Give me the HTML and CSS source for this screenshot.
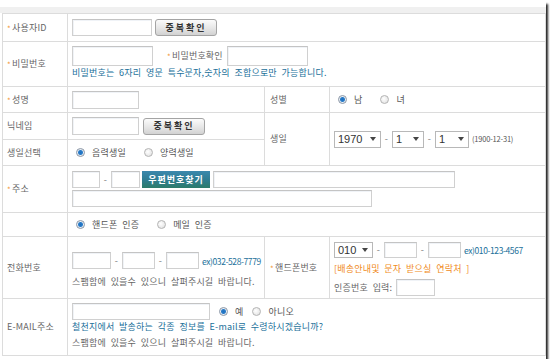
FILE: index.html
```html
<!DOCTYPE html>
<html>
<head>
<meta charset="utf-8">
<title>회원가입</title>
<link rel="stylesheet" href="styles.css">
</head>
<body>
<div class="frame">
    <div class="band"></div>
    <div class="form">
        <!-- 사용자ID -->
        <div class="th"><span class="req">*</span>사용자ID</div>
        <div class="td wide mid">
            <input class="inp" type="text" style="width:80px;height:17px">
            <span class="btn gray">중복확인</span>
        </div>

        <!-- 비밀번호 -->
        <div class="th"><span class="req">*</span>비밀번호</div>
        <div class="td wide pw">
            <div class="line">
                <input class="inp" type="text" style="width:81px;height:20px">
                <span class="sub"><span class="req">*</span>비밀번호확인</span>
                <input class="inp" type="text" style="width:81px;height:20px">
            </div>
            <div class="blue">비밀번호는 6자리 영문 특수문자,숫자의 조합으로만 가능합니다.</div>
        </div>

        <!-- 성명 / 성별 -->
        <div class="th"><span class="req">*</span>성명</div>
        <div class="td mid">
            <input class="inp" type="text" style="width:67px;height:18px">
        </div>
        <div class="th th2">성별</div>
        <div class="td mid opts">
            <span class="opt"><i class="rd on"></i>남</span>
            <span class="opt"><i class="rd"></i>녀</span>
        </div>

        <!-- 닉네임 / 생일 -->
        <div class="th">닉네임</div>
        <div class="td mid">
            <input class="inp" type="text" style="width:67px;height:18px">
            <span class="btn gray nick">중복확인</span>
        </div>
        <div class="th th2 tall">생일</div>
        <div class="td mid tall">
            <span class="sel" style="width:47px">1970<i class="arr"></i></span>
            <span class="dash">-</span>
            <span class="sel" style="width:32px">1<i class="arr"></i></span>
            <span class="dash">-</span>
            <span class="sel" style="width:34px">1<i class="arr"></i></span>
            <span class="range">(1900-12-31)</span>
        </div>

        <!-- 생일선택 -->
        <div class="th">생일선택</div>
        <div class="td mid opts">
            <span class="opt"><i class="rd on"></i>음력생일</span>
            <span class="opt"><i class="rd"></i>양력생일</span>
        </div>

        <!-- 주소 -->
        <div class="th"><span class="req">*</span>주소</div>
        <div class="td wide addr">
            <div class="line">
                <input class="inp" type="text" style="width:28px;height:17px">
                <span class="dash">-</span>
                <input class="inp" type="text" style="width:29px;height:17px">
                <span class="btn zip">우편번호찾기</span>
                <input class="inp" type="text" style="width:242px;height:17px">
            </div>
            <div class="line">
                <input class="inp" type="text" style="width:300px;height:17px">
            </div>
        </div>

        <!-- 인증 -->
        <div class="th"></div>
        <div class="td wide mid opts">
            <span class="opt"><i class="rd on"></i>핸드폰 인증</span>
            <span class="opt"><i class="rd"></i>메일 인증</span>
        </div>

        <!-- 전화번호 / 핸드폰번호 -->
        <div class="th">전화번호</div>
        <div class="td tel">
            <div class="line">
                <input class="inp" type="text" style="width:39px;height:17px">
                <span class="dash">-</span>
                <input class="inp" type="text" style="width:33px;height:17px">
                <span class="dash">-</span>
                <input class="inp" type="text" style="width:33px;height:17px">
                <span class="ex">ex)032-528-7779</span>
            </div>
            <div class="note">스팸함에 있을수 있으니 살펴주시길 바랍니다.</div>
        </div>
        <div class="th th2"><span class="req">*</span>핸드폰번호</div>
        <div class="td hp">
            <div class="line">
                <span class="sel" style="width:39px;height:16px">010<i class="arr"></i></span>
                <span class="dash">-</span>
                <input class="inp" type="text" style="width:33px;height:16px">
                <span class="dash">-</span>
                <input class="inp" type="text" style="width:33px;height:16px">
                <span class="ex">ex)010-123-4567</span>
            </div>
            <div class="orange">[배송안내및 문자 받으실 연락처 ]</div>
            <div class="line cert">
                <span>인증번호 입력:</span>
                <input class="inp" type="text" style="width:39px;height:17px">
            </div>
        </div>

        <!-- E-MAIL -->
        <div class="th">E-MAIL주소</div>
        <div class="td wide mail">
            <div class="line">
                <input class="inp" type="text" style="width:138px;height:17px">
                <span class="opt yes"><i class="rd on"></i>예</span>
                <span class="opt"><i class="rd"></i>아니오</span>
            </div>
            <div class="blue">철천지에서 발송하는 각종 정보를 E-mail로 수령하시겠습니까?</div>
            <div class="note">스팸함에 있을수 있으니 살펴주시길 바랍니다.</div>
        </div>
    </div>
</div>
</body>
</html>
```

FILE: styles.css
```css
*{
    margin: 0;
    padding: 0;
    box-sizing: border-box;
}
body{
    background: #fff;
    font-family: "Noto Sans CJK KR", "Noto Sans", sans-serif;
    font-size: 9px;
    line-height: 12px;
    word-spacing: 2.5px;
    letter-spacing: .2px;
    color: #666;
}
.frame{
    width: 546px;
    height: 359px;
    background: #fff;
    box-shadow: 2px 4px 2px rgba(0,0,0,.85);
    padding-top: 7px;
}
.band{
    height: 6px;
    background: #f0f0f0;
}
.form{
    display: grid;
    grid-template-columns: 65px 197px 65px 216px;
    grid-template-rows: 28px 45px 26px 27px 26px 47px 24px 62px 57px;
    width: 544px;
    margin-left: 2px;
    border-top: 1px solid #dcdcdc;
    border-left: 1px solid #dcdcdc;
}
.th, .td{
    border-right: 1px solid #dcdcdc;
    border-bottom: 1px solid #dcdcdc;
}
.th{
    display: flex;
    align-items: center;
    padding-left: 4px;
}
.th2{
    padding-left: 5px;
}
.td{
    padding-left: 4px;
}
.wide{
    grid-column: span 3;
}
.tall{
    grid-row: span 2;
}
.mid{
    display: flex;
    align-items: center;
}
.req{
    color: #f39a3c;
    font-size: 8px;
    margin-right: 1px;
    position: relative;
    top: 1px;
}
.line{
    display: flex;
    align-items: center;
}
.inp{
    display: block;
    border: 1px solid #d0d0d0;
    border-top-color: #c4c4c4;
    background: #fff;
    box-shadow: inset 1px 1px 0 #f0f3f7;
    outline: none;
}
.btn{
    display: inline-flex;
    align-items: center;
    justify-content: center;
    height: 17px;
    font-weight: bold;
    font-size: 9px;
}
.gray{
    width: 62px;
    margin-left: 3px;
    color: #333;
    letter-spacing: 2px;
    border: 1px solid #a4a4a4;
    border-radius: 3px;
    background: linear-gradient(#fbfbfb, #e6e6e6 55%, #d2d2d2);
}
.nick{
    margin-left: 4px;
}
.zip{
    width: 68px;
    margin: 0 3px 0 2px;
    color: #fff;
    letter-spacing: 1px;
    background: linear-gradient(#3b88ad, #2f7d93 50%, #2c7c6a);
}
.dash{
    width: 11px;
    text-align: center;
    color: #777;
}
.pw{
    padding-top: 4px;
}
.sub{
    margin: 0 4px 0 14px;
}
.blue{
    color: #22709a;
    margin-top: 1px;
}
.opts{
    padding-left: 8px;
}
.opt{
    display: inline-flex;
    align-items: center;
    margin-right: 18px;
    color: #555;
}
.rd{
    display: block;
    width: 9px;
    height: 9px;
    border-radius: 50%;
    border: 1px solid #b4b4b4;
    background: radial-gradient(circle at 40% 40%, #fff, #dcdcdc);
    margin-right: 7px;
}
.rd.on{
    border-color: #8a96a6;
    background: radial-gradient(circle, #1d6fbf 0, #2a7cc8 2px, #e8eef4 3px, #fff);
}
.sel{
    display: inline-flex;
    align-items: center;
    justify-content: space-between;
    height: 17px;
    padding: 0 4px 0 3px;
    border: 1px solid #b8b8b8;
    background: #fff;
    font-family: "Liberation Sans", sans-serif;
    font-size: 11px;
    letter-spacing: 0;
    color: #333;
}
.arr{
    width: 0;
    height: 0;
    border-left: 3px solid transparent;
    border-right: 3px solid transparent;
    border-top: 4px solid #444;
}
.range{
    margin-left: 3px;
    font-size: 7.5px;
    letter-spacing: -.2px;
    color: #555;
}
.addr{
    padding-top: 5px;
}
.addr .line + .line{
    margin-top: 2px;
}
.tel{
    padding-top: 15px;
}
.ex{
    margin-left: 3px;
    color: #22709a;
    font-size: 8.5px;
    letter-spacing: -.4px;
}
.note{
    margin-top: 7px;
    color: #666;
}
.hp{
    padding-top: 5px;
}
.orange{
    margin-top: 5px;
    color: #f08a22;
}
.cert{
    margin-top: 4px;
}
.cert span{
    margin-right: 4px;
}
.mail{
    padding-top: 4px;
}
.mail .note{
    margin-top: 4px;
}
.yes{
    margin-left: 9px;
    margin-right: 9px;
}
```
